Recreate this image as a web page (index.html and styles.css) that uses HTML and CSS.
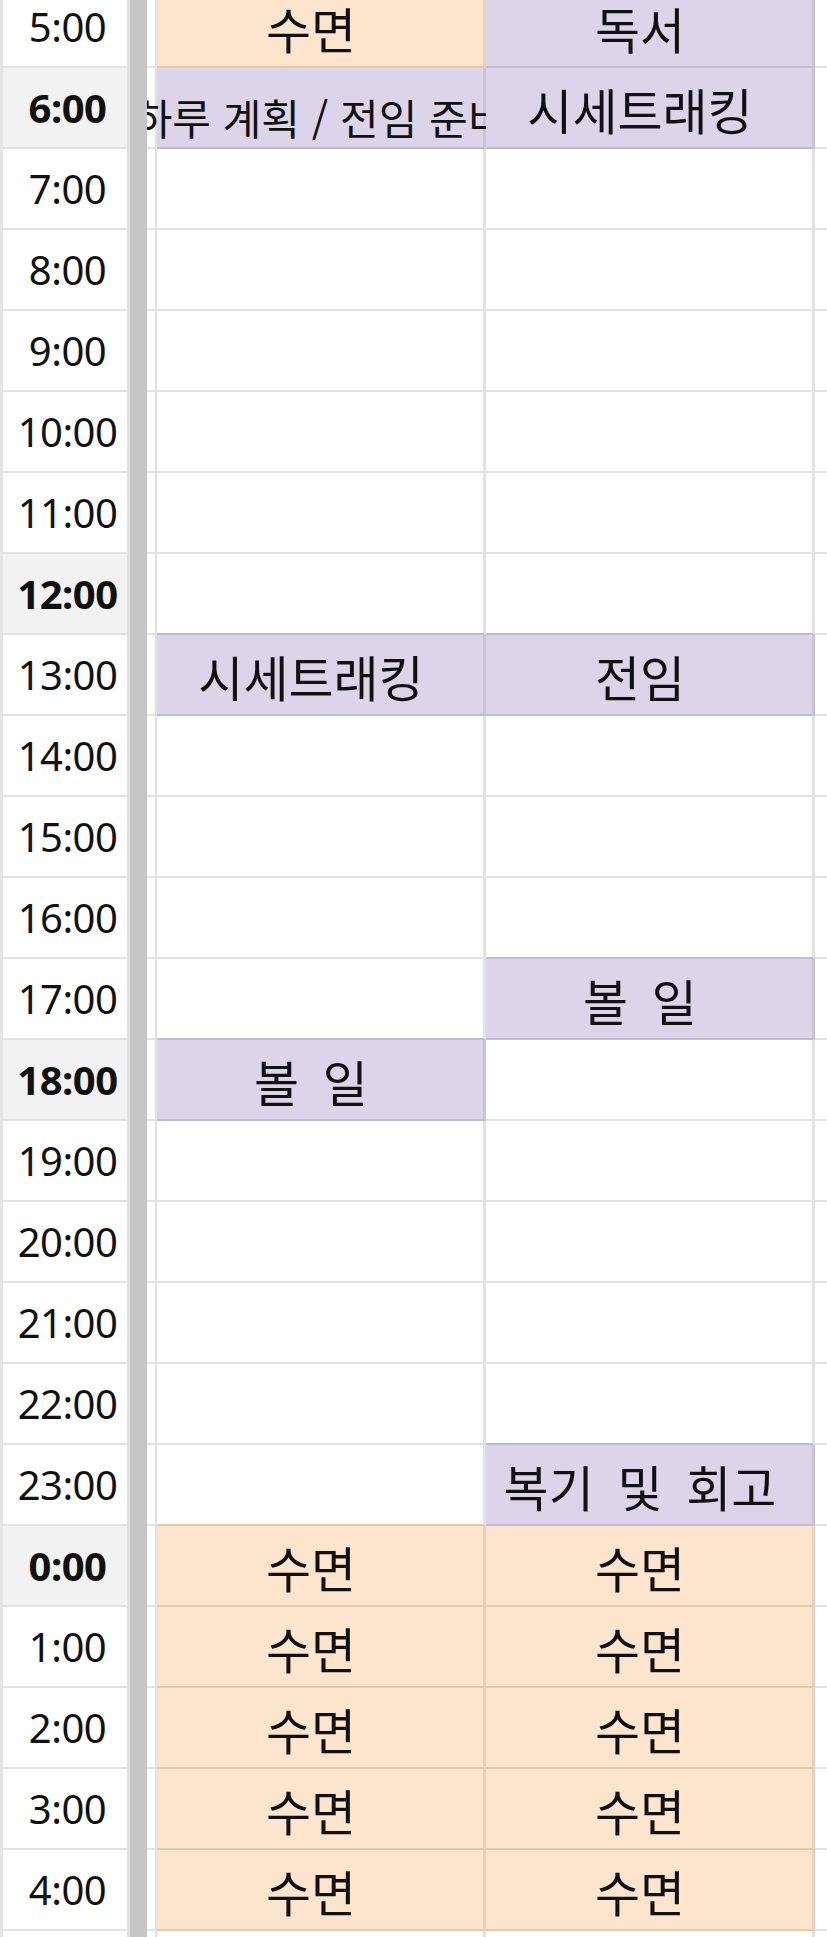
FILE: index.html
```html
<!DOCTYPE html>
<html lang="ko">
<head>
<meta charset="utf-8">
<title>시간표</title>
<link rel="stylesheet" href="styles.css">
</head>
<body>
<div class="sheet">
  <div class="row"><div class="stub"></div><div class="time">5:00</div><div class="bar"></div><div class="gap"></div><div class="cell o">수면</div><div class="cell p">독서</div><div class="rest"></div></div>
  <div class="row"><div class="stub"></div><div class="time b">6:00</div><div class="bar"></div><div class="gap"></div><div class="cell p over"><span class="small">하루 계획 / 전임 준비</span></div><div class="cell p">시세트래킹</div><div class="rest"></div></div>
  <div class="row"><div class="stub"></div><div class="time">7:00</div><div class="bar"></div><div class="gap"></div><div class="cell"></div><div class="cell"></div><div class="rest"></div></div>
  <div class="row"><div class="stub"></div><div class="time">8:00</div><div class="bar"></div><div class="gap"></div><div class="cell"></div><div class="cell"></div><div class="rest"></div></div>
  <div class="row"><div class="stub"></div><div class="time">9:00</div><div class="bar"></div><div class="gap"></div><div class="cell"></div><div class="cell"></div><div class="rest"></div></div>
  <div class="row"><div class="stub"></div><div class="time">10:00</div><div class="bar"></div><div class="gap"></div><div class="cell"></div><div class="cell"></div><div class="rest"></div></div>
  <div class="row"><div class="stub"></div><div class="time">11:00</div><div class="bar"></div><div class="gap"></div><div class="cell"></div><div class="cell"></div><div class="rest"></div></div>
  <div class="row"><div class="stub"></div><div class="time b">12:00</div><div class="bar"></div><div class="gap"></div><div class="cell ap"></div><div class="cell ap"></div><div class="rest"></div></div>
  <div class="row"><div class="stub"></div><div class="time">13:00</div><div class="bar"></div><div class="gap"></div><div class="cell p">시세트래킹</div><div class="cell p">전임</div><div class="rest"></div></div>
  <div class="row"><div class="stub"></div><div class="time">14:00</div><div class="bar"></div><div class="gap"></div><div class="cell"></div><div class="cell"></div><div class="rest"></div></div>
  <div class="row"><div class="stub"></div><div class="time">15:00</div><div class="bar"></div><div class="gap"></div><div class="cell"></div><div class="cell"></div><div class="rest"></div></div>
  <div class="row"><div class="stub"></div><div class="time">16:00</div><div class="bar"></div><div class="gap"></div><div class="cell"></div><div class="cell ap"></div><div class="rest"></div></div>
  <div class="row"><div class="stub"></div><div class="time">17:00</div><div class="bar"></div><div class="gap"></div><div class="cell ap"></div><div class="cell p"><span class="wide">볼 일</span></div><div class="rest"></div></div>
  <div class="row"><div class="stub"></div><div class="time b">18:00</div><div class="bar"></div><div class="gap"></div><div class="cell p"><span class="wide">볼 일</span></div><div class="cell"></div><div class="rest"></div></div>
  <div class="row"><div class="stub"></div><div class="time">19:00</div><div class="bar"></div><div class="gap"></div><div class="cell"></div><div class="cell"></div><div class="rest"></div></div>
  <div class="row"><div class="stub"></div><div class="time">20:00</div><div class="bar"></div><div class="gap"></div><div class="cell"></div><div class="cell"></div><div class="rest"></div></div>
  <div class="row"><div class="stub"></div><div class="time">21:00</div><div class="bar"></div><div class="gap"></div><div class="cell"></div><div class="cell"></div><div class="rest"></div></div>
  <div class="row"><div class="stub"></div><div class="time">22:00</div><div class="bar"></div><div class="gap"></div><div class="cell"></div><div class="cell ap"></div><div class="rest"></div></div>
  <div class="row"><div class="stub"></div><div class="time">23:00</div><div class="bar"></div><div class="gap"></div><div class="cell ao"></div><div class="cell p"><span class="wide">복기 및 회고</span></div><div class="rest"></div></div>
  <div class="row"><div class="stub"></div><div class="time b">0:00</div><div class="bar"></div><div class="gap"></div><div class="cell o">수면</div><div class="cell o">수면</div><div class="rest"></div></div>
  <div class="row"><div class="stub"></div><div class="time">1:00</div><div class="bar"></div><div class="gap"></div><div class="cell o">수면</div><div class="cell o">수면</div><div class="rest"></div></div>
  <div class="row"><div class="stub"></div><div class="time">2:00</div><div class="bar"></div><div class="gap"></div><div class="cell o">수면</div><div class="cell o">수면</div><div class="rest"></div></div>
  <div class="row"><div class="stub"></div><div class="time">3:00</div><div class="bar"></div><div class="gap"></div><div class="cell o">수면</div><div class="cell o">수면</div><div class="rest"></div></div>
  <div class="row"><div class="stub"></div><div class="time">4:00</div><div class="bar"></div><div class="gap"></div><div class="cell o">수면</div><div class="cell o">수면</div><div class="rest"></div></div>
  <div class="row"><div class="stub"></div><div class="time"></div><div class="bar"></div><div class="gap"></div><div class="cell"></div><div class="cell"></div><div class="rest"></div></div>
</div>
</body>
</html>
```

FILE: styles.css
```css
html, body {
  margin: 0;
  padding: 0;
  background: #ffffff;
}
body {
  height: 100vh;
  overflow: hidden;
  font-family: "Noto Sans CJK KR", sans-serif;
  color: #111111;
}
.sheet {
  margin-top: -13px;
}
.row {
  display: grid;
  grid-template-columns: 3px 127px 17px 10px 329px 329px 1fr;
  height: 81px;
}
.stub {
  background: #e4e4e4;
}
.time {
  border-right: 3px solid #e2e2e2;
  border-bottom: 2px solid #e2e2e2;
  background: #ffffff;
  display: flex;
  align-items: center;
  justify-content: center;
  padding-left: 5px;
  font-family: "Noto Sans", "Noto Sans CJK KR", sans-serif;
  font-size: 40px;
  letter-spacing: -0.5px;
  color: #111111;
}
.time.b {
  background: #f2f2f2;
  font-weight: 700;
}
.bar {
  background: #c6c6c6;
  z-index: 1;
}
.gap {
  border-right: 2px solid #e2e2e2;
  border-bottom: 2px solid #e2e2e2;
}
.cell {
  border-right: 3px solid #e2e2e2;
  border-bottom: 2px solid #e2e2e2;
  display: flex;
  align-items: center;
  justify-content: center;
  padding: 4px 18px 0 0;
  font-size: 49px;
  line-height: 1.2;
  white-space: nowrap;
  overflow: hidden;
}
.cell.p {
  background: #dcd5ea;
  border-right-color: #c9c3d8;
  border-bottom-color: #c1bad2;
}
.cell.o {
  background: #fde5cd;
  border-right-color: #e9d2bd;
  border-bottom-color: #e6c9ab;
}
.cell.ap {
  border-bottom-color: #c1bad2;
}
.cell.ao {
  border-bottom-color: #e6c9ab;
}
.cell.over {
  overflow: visible;
  padding: 20px 0 0 0;
}
.small {
  font-size: 42px;
}
.wide {
  word-spacing: 10px;
}
.rest {
  border-bottom: 2px solid #e2e2e2;
}
```
